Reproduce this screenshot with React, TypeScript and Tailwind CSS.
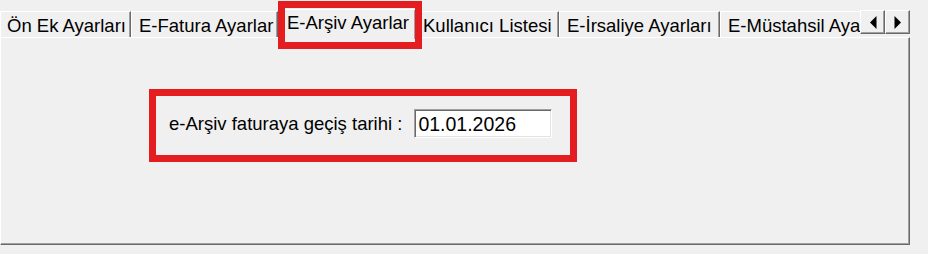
import React from "react";

const tabs = [
  { label: "Ön Ek Ayarları", w: "w-[131px]", pl: "pl-[6px]" },
  { label: "E-Fatura Ayarlar", w: "w-[147px]", pl: "pl-[7px]" },
];
const tabsAfter = [
  { label: "Kullanıcı Listesi", w: "w-[143px]", pl: "pl-[6px]" },
  { label: "E-İrsaliye Ayarları", w: "w-[161px]", pl: "pl-[7px]" },
  { label: "E-Müstahsil Ayarları", w: "w-[180px]", pl: "pl-[7px]" },
];

function Tab({ label, w, pl }: { label: string; w: string; pl: string }) {
  return (
    <div
      className={`${w} ${pl} mt-[11px] h-[26px] shrink-0 pt-[3px] leading-[21px] whitespace-nowrap overflow-hidden border-t border-l border-white border-r border-r-[#696969] shadow-[inset_-1px_0_0_#a0a0a0]`}
    >
      {label}
    </div>
  );
}

function ArrowButton({ dir }: { dir: "left" | "right" }) {
  return (
    <div className="w-[25px] h-[24px] bg-[#f0f0f0] border-t border-l border-white border-r border-b border-r-[#696969] border-b-[#696969] shadow-[inset_-1px_-1px_0_#a0a0a0] flex items-center justify-center">
      <svg width="8" height="13" viewBox="0 0 8 13">
        {dir === "left" ? (
          <polygon points="7.5,0 7.5,13 1,6.5" fill="#000" />
        ) : (
          <polygon points="0.5,0 0.5,13 7,6.5" fill="#000" />
        )}
      </svg>
    </div>
  );
}

export default function App() {
  return (
    <div
      className="w-[928px] h-[254px] bg-[#f0f0f0] relative overflow-hidden text-black text-[18.5px]"
      style={{ fontFamily: '"Liberation Sans", Arial, sans-serif' }}
    >
      {/* Tab strip */}
      <div className="relative h-[37px] flex items-start">
        <div className="flex items-start w-[860px] overflow-hidden h-[40px] relative z-10">
          {tabs.map((t) => (
            <Tab key={t.label} {...t} />
          ))}
          <div className="w-[138px] shrink-0 mt-[9px] h-[30px] pl-[8px] pt-[2px] leading-[21px] whitespace-nowrap bg-[#f0f0f0] border-t border-l border-white border-r border-r-[#696969] shadow-[inset_-1px_0_0_#a0a0a0]">
            E-Arşiv Ayarlar
          </div>
          {tabsAfter.map((t) => (
            <Tab key={t.label} {...t} />
          ))}
        </div>
        <div className="flex mt-[10px]">
          <ArrowButton dir="left" />
          <ArrowButton dir="right" />
        </div>
      </div>

      {/* Panel */}
      <div className="relative w-[910px] h-[208px] border-t border-l border-white border-r border-b border-r-[#696969] border-b-[#696969] shadow-[inset_-1px_-1px_0_#a0a0a0]">
        <div className="flex items-center pl-[168px] pt-[71px]">
          <span className="leading-[21px] whitespace-nowrap">e-Arşiv faturaya geçiş tarihi :</span>
          <div className="ml-[12px] w-[138px] h-[29px] bg-white border border-t-[#a0a0a0] border-l-[#a0a0a0] border-r-white border-b-white shadow-[inset_1px_1px_0_#696969,inset_-1px_-1px_0_#e3e3e3] pl-[3px] flex items-center text-[19.5px] leading-[22px]">
            01.01.2026
          </div>
        </div>

        {/* annotation box 2 */}
        <div className="absolute left-[148px] top-[51px] w-[428px] h-[73px] border-[7px] border-[#e41e20] pointer-events-none" />
      </div>

      {/* annotation box 1 */}
      <div className="absolute left-[278px] top-[1px] w-[144px] h-[48px] border-[7px] border-[#e41e20] z-20 pointer-events-none" />
    </div>
  );
}
